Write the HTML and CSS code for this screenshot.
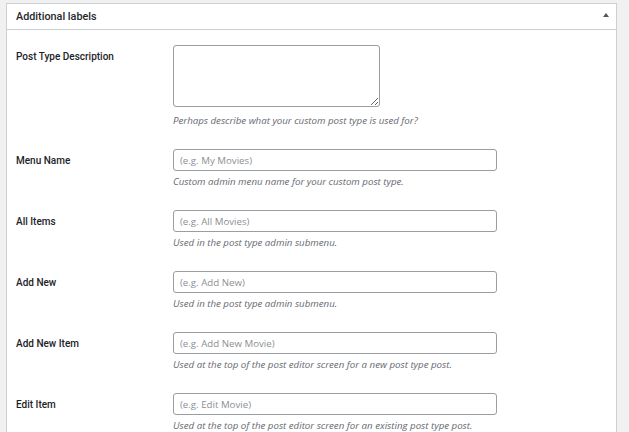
FILE: index.html
```html
<!DOCTYPE html>
<html>
<head>
    <link rel="stylesheet" href="styles.css">
</head>
<body>
    <div class="postbox">
        <div class="postbox-header">
            <h2 class="postbox-title">Additional labels</h2>
            <span class="toggle-indicator"></span>
        </div>

        <div class="form-table">
            <div class="form-row">
                <label class="form-label" for="description">Post Type Description</label>
                <div class="form-field">
                    <textarea id="description" class="field-textarea"></textarea>
                    <p class="field-help">Perhaps describe what your custom post type is used for?</p>
                </div>
            </div>

            <div class="form-row">
                <label class="form-label" for="menu_name">Menu Name</label>
                <div class="form-field">
                    <input id="menu_name" class="field-input" type="text" placeholder="(e.g. My Movies)">
                    <p class="field-help">Custom admin menu name for your custom post type.</p>
                </div>
            </div>

            <div class="form-row">
                <label class="form-label" for="all_items">All Items</label>
                <div class="form-field">
                    <input id="all_items" class="field-input" type="text" placeholder="(e.g. All Movies)">
                    <p class="field-help">Used in the post type admin submenu.</p>
                </div>
            </div>

            <div class="form-row">
                <label class="form-label" for="add_new">Add New</label>
                <div class="form-field">
                    <input id="add_new" class="field-input" type="text" placeholder="(e.g. Add New)">
                    <p class="field-help">Used in the post type admin submenu.</p>
                </div>
            </div>

            <div class="form-row">
                <label class="form-label" for="add_new_item">Add New Item</label>
                <div class="form-field">
                    <input id="add_new_item" class="field-input" type="text" placeholder="(e.g. Add New Movie)">
                    <p class="field-help">Used at the top of the post editor screen for a new post type post.</p>
                </div>
            </div>

            <div class="form-row">
                <label class="form-label" for="edit_item">Edit Item</label>
                <div class="form-field">
                    <input id="edit_item" class="field-input" type="text" placeholder="(e.g. Edit Movie)">
                    <p class="field-help">Used at the top of the post editor screen for an existing post type post.</p>
                </div>
            </div>
        </div>
    </div>
</body>
</html>
```

FILE: styles.css
```css
html, body {
    height: 100%;
    overflow: hidden;
}

body {
    margin: 0;
    padding: 3px 12px 0 6px;
    background-color: #f1f1f1;
    font-family: "Open Sans", "Noto Sans", sans-serif;
    font-size: 11px;
    color: #1d2327;
}

.postbox {
    background-color: #fff;
    border: 1px solid #ccd0d4;
    min-height: 100%;
}

.postbox-header {
    display: flex;
    align-items: center;
    justify-content: space-between;
    height: 25px;
    padding: 0 7px 0 9px;
    border-bottom: 1px solid #ccd0d4;
}

.postbox-title {
    margin: 0 0 1px;
    font-family: Roboto, "Open Sans", sans-serif;
    font-size: 10.8px;
    font-weight: 500;
    color: #23282d;
}

.toggle-indicator {
    width: 0;
    height: 0;
    margin-bottom: 3px;
    border-left: 3px solid transparent;
    border-right: 3px solid transparent;
    border-bottom: 4px solid #50575e;
}

.form-table {
    padding: 0 10px 0 9px;
}

.form-row {
    display: grid;
    grid-template-columns: 157px 1fr;
    padding: 15px 0 4px;
}

.form-label {
    padding-top: 3px;
    line-height: 18px;
    font-family: Roboto, "Open Sans", sans-serif;
    font-size: 10px;
    font-weight: 500;
    color: #1d2327;
}

.field-textarea {
    display: block;
    box-sizing: border-box;
    width: 207px;
    height: 62px;
    margin: 0 0 5px;
    border: 1px solid #9a9da1;
    border-radius: 3px;
    font-family: inherit;
}

.field-input {
    display: block;
    box-sizing: border-box;
    width: 324px;
    height: 22px;
    margin: 0;
    padding: 0 6px;
    border: 1px solid #9a9da1;
    border-radius: 3px;
    font-family: inherit;
    font-size: 9.7px;
    color: #2c3338;
}

.field-input::placeholder {
    color: #8c8f94;
}

.field-help {
    margin: 2px 0 0;
    line-height: 18px;
    font-size: 9.7px;
    font-style: italic;
    color: #646970;
}
```
